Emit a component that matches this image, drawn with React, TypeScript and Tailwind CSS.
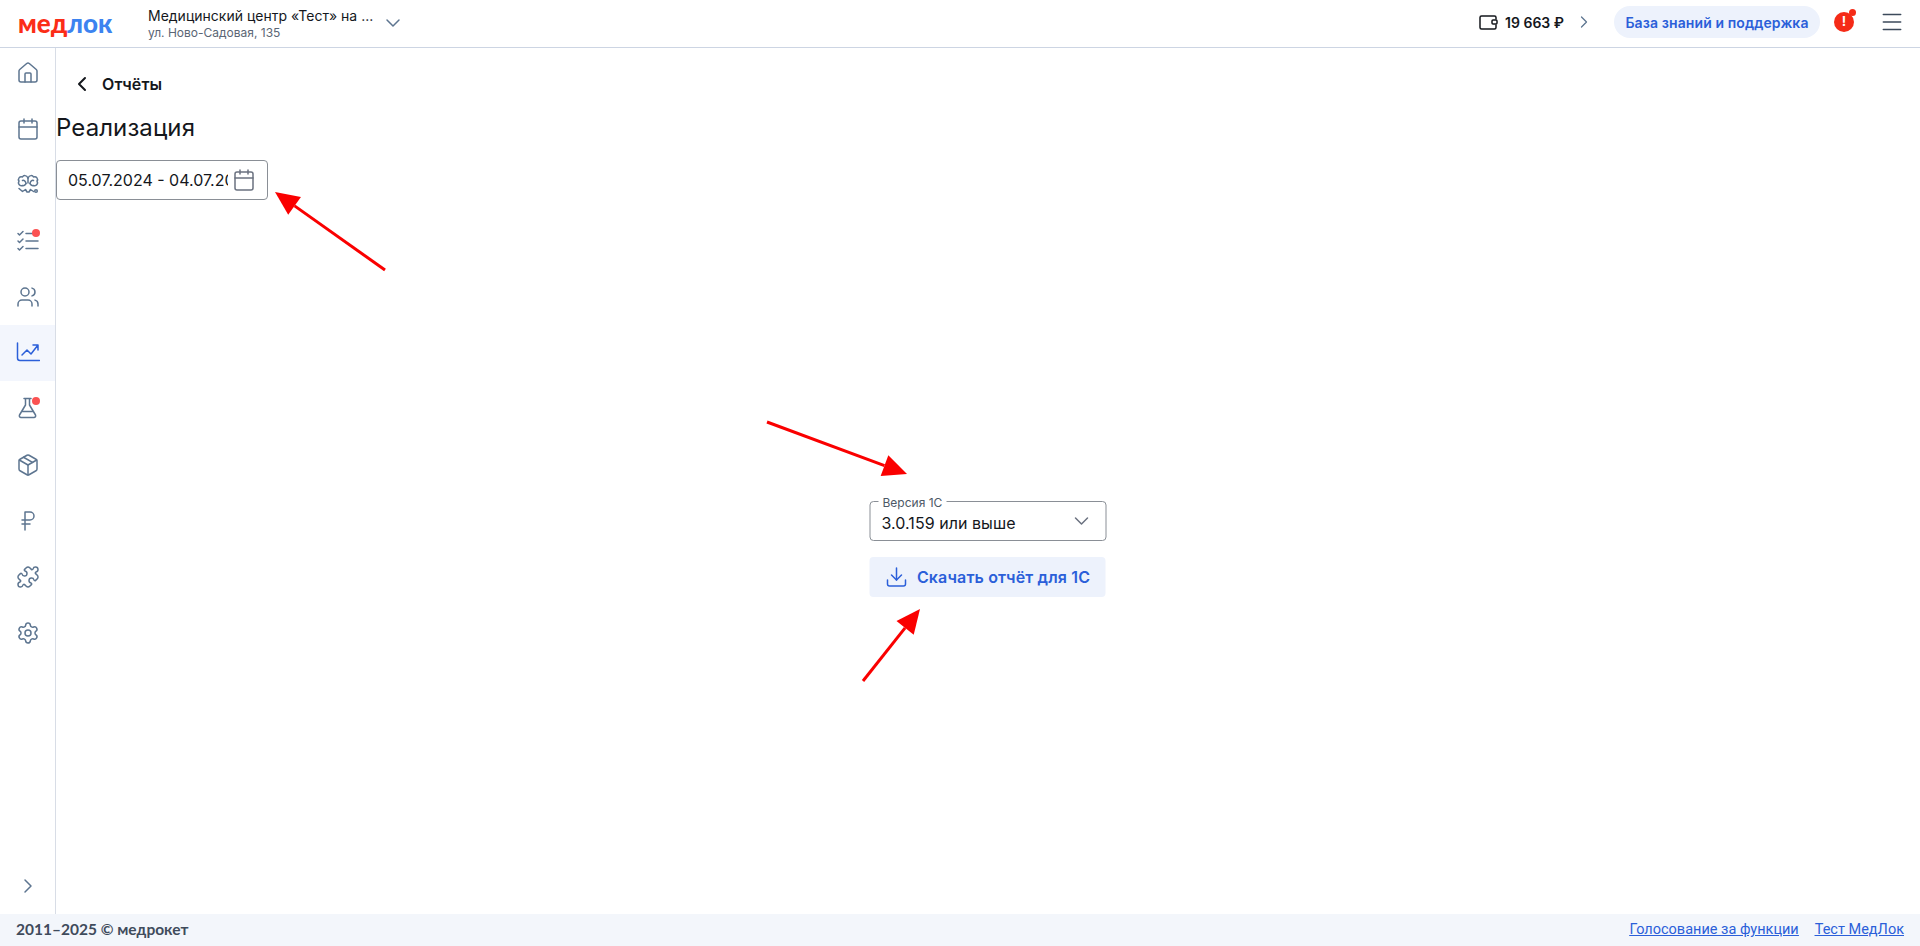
import { Calendar, ChevronDown, ChevronLeft, ChevronRight, Download, House, Menu, Package, Puzzle, RussianRuble, Settings, Users } from "lucide-react";

function BrainIcon() {
    return (
        <svg width="24" height="24" viewBox="0 0 24 24" fill="none" stroke="currentColor" strokeWidth="1.5" strokeLinecap="round" strokeLinejoin="round">
            <path d="M12 5C10.500 2 7.500 2 6.500 4 3.500 3 1.500 6 3 8 1.500 10.500 3.500 13.500 6.500 12.500 7.500 13 9.500 12 10 10.500" />
            <path d="M12 5C13.500 2 16.500 2 17.500 4 20.500 3 22.500 6 21 8 22.500 10.500 20.500 13.500 17.500 12.500 16.500 13 14.500 12 14 10.500" />
            <path d="M6.500 7.500C8 7 9.500 8 10 10.500M17.500 7.500C16 7 14.500 8 14 10.500M12 5V10" />
            <path d="M3 15.500L6.500 18.500 9.500 16.500 11 19 13 19 14.500 16.500 17.500 18.500" />
            <circle cx="20" cy="18" r="1.300" />
        </svg>
    );
}

function ChecklistIcon() {
    return (
        <svg width="24" height="24" viewBox="0 0 24 24" fill="none" stroke="currentColor" strokeWidth="1.5" strokeLinecap="round" strokeLinejoin="round">
            <path d="M2 4.500L3.500 6 7 2.500M2 12L3.500 13.500 7 10M2 19.500L3.500 21 7 17.500" />
            <path d="M10 4.500H22M10 12H22M10 19.500H22" />
        </svg>
    );
}

function ChartIcon() {
    return (
        <svg width="24" height="24" viewBox="0 0 24 24" fill="none" stroke="currentColor" strokeWidth="1.5" strokeLinecap="round" strokeLinejoin="round">
            <path d="M1.500 2V17A2.500 2.500 0 0 0 4 19.500H23.500" />
            <path d="M6 14L11 9 15 13 22 4M17 4H22V9" />
        </svg>
    );
}

function FlaskIcon() {
    return (
        <svg width="24" height="24" viewBox="0 0 24 24" fill="none" stroke="currentColor" strokeWidth="1.5" strokeLinecap="round" strokeLinejoin="round">
            <path d="M8 1.500H15M9.500 1.500V8L3.500 18A1.700 1.700 0 0 0 5 20.500H18A1.700 1.700 0 0 0 19.500 18L13.500 8V1.500M6 14.500H17" />
        </svg>
    );
}

function WalletIcon() {
    return (
        <svg width="20" height="20" viewBox="0 0 20 20" fill="none" stroke="currentColor" strokeWidth="1.5" strokeLinecap="round" strokeLinejoin="round">
            <path d="M18 7V5.500A1.500 1.500 0 0 0 16.500 4H3.500A1.500 1.500 0 0 0 2 5.500V15.500A1.500 1.500 0 0 0 3.500 17H16.500A1.500 1.500 0 0 0 18 15.500V13" />
            <rect x="14" y="8" width="5" height="4" rx="1" />
        </svg>
    );
}

const navItems = [
    { icon: <House size={24} strokeWidth={1.5} /> },
    { icon: <Calendar size={24} strokeWidth={1.5} /> },
    { icon: <BrainIcon /> },
    { icon: <ChecklistIcon />, dot: true },
    { icon: <Users size={24} strokeWidth={1.5} /> },
    { icon: <ChartIcon />, active: true },
    { icon: <FlaskIcon />, dot: true },
    { icon: <Package size={24} strokeWidth={1.5} /> },
    { icon: <RussianRuble size={24} strokeWidth={1.5} /> },
    { icon: <Puzzle size={24} strokeWidth={1.5} /> },
    { icon: <Settings size={24} strokeWidth={1.5} /> },
];

function Arrow({ x1, y1, x2, y2 }: { x1: number; y1: number; x2: number; y2: number }) {
    const angle = Math.atan2(y2 - y1, x2 - x1);
    const len = 24;
    const wing = 11;
    const bx = x2 - len * Math.cos(angle);
    const by = y2 - len * Math.sin(angle);
    const px = -Math.sin(angle) * wing;
    const py = Math.cos(angle) * wing;
    return (
        <g>
            <line x1={x1} y1={y1} x2={bx} y2={by} stroke="#fa0000" strokeWidth="3" />
            <polygon points={`${x2},${y2} ${bx + px},${by + py} ${bx - px},${by - py}`} fill="#fa0000" />
        </g>
    );
}

export default function App() {
    return (
        <div className="relative flex h-screen flex-col overflow-hidden bg-white font-['Inter',sans-serif] text-[#14171c]">
            <header className="flex h-[48px] shrink-0 items-center border-b border-[#cdd5e3] pr-[15px] pb-[1px] pl-[18px]">
                <div className="w-[130px] font-['Lato',sans-serif] text-[26px] leading-none font-black">
                    <span className="text-[#fb2d17]">мед</span>
                    <span className="text-[#3c83f0]">лок</span>
                </div>
                <div className="flex w-[233px] flex-col">
                    <span className="text-[14px] leading-[18px] whitespace-nowrap">Медицинский центр «Тест» на ...</span>
                    <span className="text-[12px] leading-[15px] text-[#5b6675]">ул. Ново-Садовая, 135</span>
                </div>
                <ChevronDown size={24} strokeWidth={1.5} className="text-[#5d7590]" />

                <div className="mb-[2px] ml-auto flex items-center">
                    <WalletIcon />
                    <span className="ml-[7px] text-[14px] font-semibold">19 663 ₽</span>
                    <ChevronRight size={20} strokeWidth={1.5} className="ml-[10px] text-[#5d7590]" />
                    <button className="ml-[20px] h-[32px] w-[206px] rounded-full bg-[#edf2fc] text-[14px] font-semibold tracking-[0.1px] text-[#2b5fd9]">База знаний и поддержка</button>
                    <div className="relative ml-[14px] flex h-[20px] w-[20px] items-center justify-center rounded-full bg-[#f52b17] text-[13px] font-bold text-white">
                        !
                        <span className="absolute top-[-3px] right-[-2px] h-[7px] w-[7px] rounded-full bg-[#f52b17]" />
                    </div>
                    <Menu size={26} strokeWidth={1.4} className="ml-[25px] text-[#3c4a5b]" />
                </div>
            </header>

            <div className="flex min-h-0 flex-1">
                <aside className="flex w-[56px] shrink-0 flex-col border-r border-[#d8dde6]">
                    <nav className="mt-[-3px] flex flex-col">
                        {navItems.map((item, i) => (
                            <div key={i} className={item.active ? "flex h-[56px] items-center justify-center bg-[#f3f6fd] text-[#2b5fd9]" : "flex h-[56px] items-center justify-center text-[#5d7590]"}>
                                <div className="relative">
                                    {item.icon}
                                    {item.dot && <span className="absolute top-[0px] right-[0px] h-[8px] w-[8px] rounded-full bg-[#fb5252]" />}
                                </div>
                            </div>
                        ))}
                    </nav>
                    <div className="mt-auto flex h-[56px] items-center justify-center text-[#5d7590]">
                        <ChevronRight size={24} strokeWidth={1.5} />
                    </div>
                </aside>

                <main className="relative min-w-0 flex-1">
                    <div className="flex h-[72px] items-center pl-[14px]">
                        <ChevronLeft size={24} strokeWidth={2} />
                        <span className="ml-[8px] text-[16px] font-semibold tracking-[0.1px]">Отчёты</span>
                    </div>
                    <h1 className="mt-[-8px] text-[24px] leading-[32px] font-normal tracking-[0.1px]">Реализация</h1>
                    <div className="mt-[16px] flex h-[40px] w-[212px] items-center rounded-[4px] border border-[#8a8f96] pr-[8px] pl-[11px]">
                        <div className="w-[160px] overflow-hidden text-[16px] whitespace-nowrap">05.07.2024 - 04.07.2024</div>
                        <Calendar size={24} strokeWidth={1.5} className="ml-[4px] shrink-0 text-[#6b7280]" />
                    </div>

                    <div className="absolute top-[453px] left-1/2 flex w-[237px] -translate-x-1/2 flex-col gap-[16px]">
                        <div className="relative flex h-[40px] items-center justify-between rounded-[4px] border border-[#8a8f96] pt-[4px] pr-[12px] pl-[11px]">
                            <span className="absolute top-[-5px] left-[8px] bg-white px-[4px] text-[12px] leading-[12px] text-[#4d5866]">Версия 1С</span>
                            <span className="text-[16px] tracking-[0.05px]">3.0.159 или выше</span>
                            <ChevronDown size={24} strokeWidth={1.5} className="mt-[-4px] text-[#6b7280]" />
                        </div>
                        <button className="flex h-[40px] w-[236px] items-center justify-center gap-[8px] rounded-[4px] bg-[#edf2fc] text-[16px] font-semibold tracking-[0.15px] text-[#2b5fd9]">
                            <Download size={24} strokeWidth={1.5} />
                            Скачать отчёт для 1С
                        </button>
                    </div>
                </main>
            </div>

            <footer className="flex h-[32px] shrink-0 items-center justify-between bg-[#f3f6fb] px-[16px]">
                <span className="font-['Lato',sans-serif] text-[15.5px] font-bold text-[#3f4b5c]">2011–2025 © медрокет</span>
                <div className="flex gap-[16px] font-['Roboto',sans-serif] text-[14.5px] text-[#2b5fd9] underline">
                    <a>Голосование за функции</a>
                    <a>Тест МедЛок</a>
                </div>
            </footer>

            <svg className="pointer-events-none absolute inset-0" width="1920" height="946">
                <Arrow x1={385} y1={270} x2={275} y2={192} />
                <Arrow x1={767} y1={422} x2={907} y2={474} />
                <Arrow x1={863} y1={681} x2={920} y2={609} />
            </svg>
        </div>
    );
}
